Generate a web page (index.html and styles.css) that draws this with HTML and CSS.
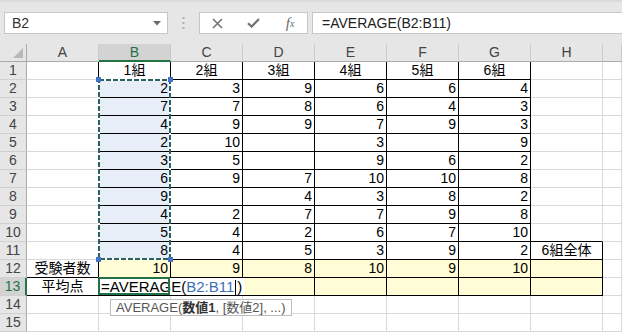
FILE: index.html
```html
<!DOCTYPE html>
<html lang="ja">
<head>
    <meta charset="UTF-8">
    <title>AVERAGE</title>
    <link rel="stylesheet" href="styles.css">
</head>
<body>

<div class="formula-bar">
    <div class="name-box">
        <span>B2</span>
        <svg width="8" height="5" viewBox="0 0 8 5"><path d="M0 0h8L4 4.5z" fill="#6a6a6a"/></svg>
    </div>
    <div class="grip">
        <svg width="3" height="12" viewBox="0 0 3 12"><rect x="0.5" y="0" width="2" height="2" fill="#b0b0b0"/><rect x="0.5" y="5" width="2" height="2" fill="#b0b0b0"/><rect x="0.5" y="10" width="2" height="2" fill="#b0b0b0"/></svg>
    </div>
    <div class="fx-buttons">
        <span class="fx-btn"><svg width="11" height="11" viewBox="0 0 11 11"><path d="M1 1l9 9M10 1l-9 9" stroke="#737373" stroke-width="1.6"/></svg></span>
        <span class="fx-btn"><svg width="13" height="10" viewBox="0 0 13 10"><path d="M1 5.2l3.6 3.4L12 1" stroke="#737373" stroke-width="2.2" fill="none"/></svg></span>
        <span class="fx-btn fx-text">f<sub>x</sub></span>
    </div>
    <div class="formula-input">=AVERAGE(B2:B11)</div>
</div>

<div class="sheet" id="sheet">
    <div class="range">
        <svg class="ants" width="73" height="181"><rect x="1" y="1" width="71" height="179" fill="none" stroke="#fff" stroke-width="2"/><rect x="1" y="1" width="71" height="179" fill="none" stroke="#2a6262" stroke-width="2" stroke-dasharray="5 2"/></svg>
        <span class="handle tl"></span><span class="handle tr"></span>
        <span class="handle bl"></span><span class="handle br"></span>
    </div>
    <div class="tip">AVERAGE(<b>数値1</b>, [数値2], ...)</div>
</div>

<script>
    const cols = ["A", "B", "C", "D", "E", "F", "G", "H", ""];
    const rows = [
        ["", "1組", "2組", "3組", "4組", "5組", "6組", ""],
        ["", 2, 3, 9, 6, 6, 4, ""],
        ["", 7, 7, 8, 6, 4, 3, ""],
        ["", 4, 9, 9, 7, 9, 3, ""],
        ["", 2, 10, "", 3, "", 9, ""],
        ["", 3, 5, "", 9, 6, 2, ""],
        ["", 6, 9, 7, 10, 10, 8, ""],
        ["", 9, "", 4, 3, 8, 2, ""],
        ["", 4, 2, 7, 7, 9, 8, ""],
        ["", 5, 4, 2, 6, 7, 10, ""],
        ["", 8, 4, 5, 3, 9, 2, "6組全体"],
        ["受験者数", 10, 9, 8, 10, 9, 10, ""],
        ["平均点", "", "", "", "", "", "", ""],
        [], []
    ];

    const sheet = document.getElementById("sheet");
    const add = (cls, html) => {
        const d = document.createElement("div");
        d.className = cls;
        d.innerHTML = html;
        sheet.appendChild(d);
        return d;
    };

    // 列見出し
    add("corner", "");
    cols.forEach(c => add("ch" + (c === "B" ? " on" : ""), c));

    rows.forEach((row, i) => {
        const r = i + 1;
        add("rh" + (r === 13 ? " on" : ""), r);
        for (let c = 0; c < 9; c++) {
            const v = row[c] === undefined ? "" : row[c];
            const cls = ["c"];
            const inTable = r <= 13;
            if (inTable && (c <= 6 || (c === 7 && r >= 11))) cls.push("rb");
            if (inTable && ((c >= 1 && c <= 6) || (c === 7 && r >= 10) || (c === 0 && r >= 12))) cls.push("bb");
            if (c === 1 && r >= 2 && r <= 11) cls.push("sel");
            if (c >= 1 && c <= 7 && (r === 12 || r === 13)) cls.push("yl");
            cls.push(typeof v === "number" ? "num" : "txt");

            if (r === 13 && c === 1) {
                cls.push("edit");
                add(cls.join(" "),
                    '<span class="edit-text">=AVERAGE(<span class="ref">B2:B11</span><span class="caret"></span>)</span>');
            } else {
                add(cls.join(" "), v);
            }
        }
    });
</script>

</body>
</html>
```

FILE: styles.css
```css
* { box-sizing: border-box; margin: 0; padding: 0 }
body {
    font-family: "Liberation Sans", "Noto Sans CJK JP", sans-serif;
    background: #fff;
    color: #000;
    width: 622px;
    height: 335px;
    overflow: hidden;
}

/* 数式バー */
.formula-bar {
    height: 44px;
    background: #e6e6e6;
    border-top: 2px solid #dadada;
    display: flex;
    align-items: flex-start;
    padding: 10px 0 0 4px;
}
.name-box {
    width: 164px;
    height: 22px;
    background: #fff;
    border: 1px solid #c6c6c6;
    display: flex;
    align-items: center;
    justify-content: space-between;
    padding: 0 6px 0 7px;
    font-size: 14px;
    color: #333;
}
.grip {
    width: 31px;
    height: 22px;
    display: flex;
    align-items: center;
    justify-content: center;
}
.fx-buttons {
    width: 109px;
    height: 22px;
    background: #fff;
    border: 1px solid #c6c6c6;
    display: flex;
}
.fx-btn {
    width: 36px;
    display: flex;
    align-items: center;
    justify-content: center;
}
.fx-text {
    font-family: "Liberation Serif", serif;
    font-style: italic;
    font-size: 15px;
    color: #6a6a6a;
    padding-left: 2px;
}
.fx-text sub { font-size: 10px; vertical-align: -1px; }
.formula-input {
    flex: 1;
    height: 22px;
    margin-left: 4px;
    background: #fff;
    border: 1px solid #c6c6c6;
    border-right: none;
    padding-left: 9px;
    font-size: 14px;
    line-height: 20px;
    color: #222;
}

/* シート */
.sheet {
    position: relative;
    display: grid;
    grid-template-columns: 27px repeat(8, 72px) 19px;
    grid-auto-rows: 18px;
    font-size: 14px;
}
.corner {
    background: #e6e6e6;
    border-right: 1px solid #ababab;
    border-bottom: 1px solid #ababab;
    position: relative;
}
.corner::after {
    content: "";
    position: absolute;
    right: 3px;
    bottom: 3px;
    border-left: 10px solid transparent;
    border-bottom: 10px solid #b9b9b9;
}
.ch, .rh {
    background: #e6e6e6;
    color: #444;
    text-align: center;
    line-height: 17px;
}
.ch {
    border-right: 1px solid #cacaca;
    border-bottom: 1px solid #ababab;
}
.ch.on {
    background: #d3d3d3;
    color: #217346;
    border-bottom: 2px solid #217346;
}
.rh {
    border-right: 1px solid #ababab;
    border-bottom: 1px solid #d0d0d0;
}
.rh.on {
    background: #d3d3d3;
    color: #217346;
    border-right: 2px solid #217346;
}

.c {
    border-right: 1px solid #d9d9d9;
    border-bottom: 1px solid #d9d9d9;
    line-height: 17px;
    padding: 0 2px;
    white-space: nowrap;
    overflow: hidden;
}
.c.rb { border-right-color: #000 }
.c.bb { border-bottom-color: #000 }
.c.sel { background: #e7eef8 }
.c.yl { background: #fffcd6 }
.c.num { text-align: right }
.c.txt { text-align: center }

/* 編集中のセル */
.c.edit {
    position: relative;
    z-index: 2;
    overflow: visible;
    text-align: left;
    background: #fff;
    font-size: 15px;
}
.c.edit::after {
    content: "";
    position: absolute;
    top: -1px;
    left: -1px;
    right: 0;
    bottom: 0;
    border: 2px solid #217346;
}
.edit-text {
    display: inline-block;
    background: #fff;
    padding-right: 2px;
}
.ref { color: #3c6fb5 }
.caret {
    display: inline-block;
    width: 1px;
    height: 15px;
    background: #000;
    vertical-align: -3px;
    margin: 0 1px;
}

/* 参照範囲 B2:B11 */
.range {
    position: absolute;
    grid-column: 3;
    grid-row: 3 / 13;
    top: -1px;
    left: -1px;
    width: 73px;
    height: 181px;
    z-index: 1;
}
.ants { display: block }
.handle {
    position: absolute;
    width: 5px;
    height: 5px;
    background: #4472c4;
}
.handle.tl { left: -2px; top: -2px }
.handle.tr { right: -2px; top: -2px }
.handle.bl { left: -2px; bottom: -2px }
.handle.br { right: -2px; bottom: -2px }

/* 関数ヒント */
.tip {
    position: absolute;
    grid-column: 3;
    grid-row: 15;
    top: 3px;
    left: 11px;
    height: 17px;
    background: #fff;
    border: 1px solid #bdbdbd;
    padding: 0 5px;
    font-size: 13px;
    line-height: 15px;
    color: #555;
    white-space: nowrap;
    z-index: 3;
}
.tip b { color: #333 }
```
